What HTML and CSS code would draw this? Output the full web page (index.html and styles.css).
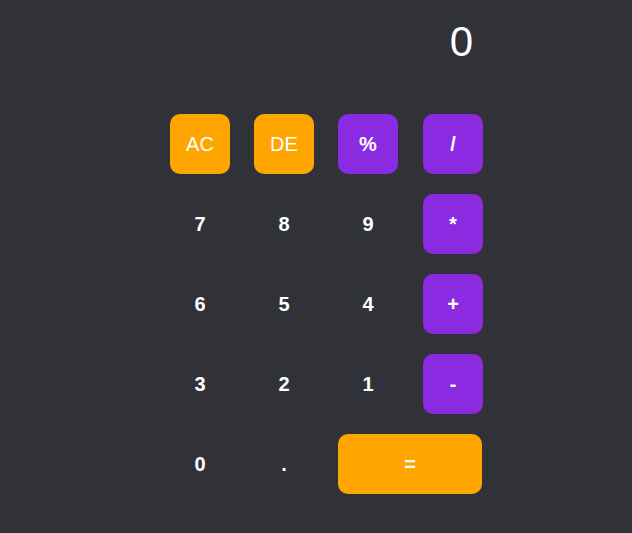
FILE: index.html
```html
<!DOCTYPE html>
<html>
<head>
<meta charset="utf-8">
<link rel="stylesheet" href="styles.css">
</head>
<body>
<div class="calc">
  <div class="display">0</div>
  <div class="keys">
    <button class="key orange light">AC</button>
    <button class="key orange light">DE</button>
    <button class="key purple">%</button>
    <button class="key purple last">/</button>
    <button class="key">7</button>
    <button class="key">8</button>
    <button class="key">9</button>
    <button class="key purple last">*</button>
    <button class="key">6</button>
    <button class="key">5</button>
    <button class="key">4</button>
    <button class="key purple last">+</button>
    <button class="key">3</button>
    <button class="key">2</button>
    <button class="key">1</button>
    <button class="key purple last">-</button>
    <button class="key">0</button>
    <button class="key">.</button>
    <button class="key orange wide">=</button>
  </div>
</div>
</body>
</html>
```
FILE: styles.css
```css
html, body {
  margin: 0;
  padding: 0;
  background: #313237;
  height: 100%;
}
body {
  font-family: "Liberation Sans", Arial, sans-serif;
  color: #fff;
}
.calc {
  width: 313px;
  margin-left: 170px;
}
.display {
  height: 86px;
  box-sizing: border-box;
  padding-top: 21px;
  padding-right: 10px;
  text-align: right;
  font-size: 42px;
  line-height: 1;
  margin-bottom: 28px;
}
.keys {
  display: grid;
  grid-template-columns: 60px 60px 60px 61px;
  grid-auto-rows: 60px;
  column-gap: 24px;
  row-gap: 20px;
}
.key {
  border: none;
  background: transparent;
  color: #fff;
  font-family: "Liberation Sans", Arial, sans-serif;
  font-size: 20px;
  font-weight: bold;
  border-radius: 10px;
  padding: 0;
  width: 60px;
  height: 60px;
}
.last { justify-self: end; }
.orange { background: #ffa500; }
.purple { background: #8a2be2; }
.light { font-weight: normal; font-size: 20px; }
.wide {
  grid-column: span 2;
  width: 144px;
}
```
